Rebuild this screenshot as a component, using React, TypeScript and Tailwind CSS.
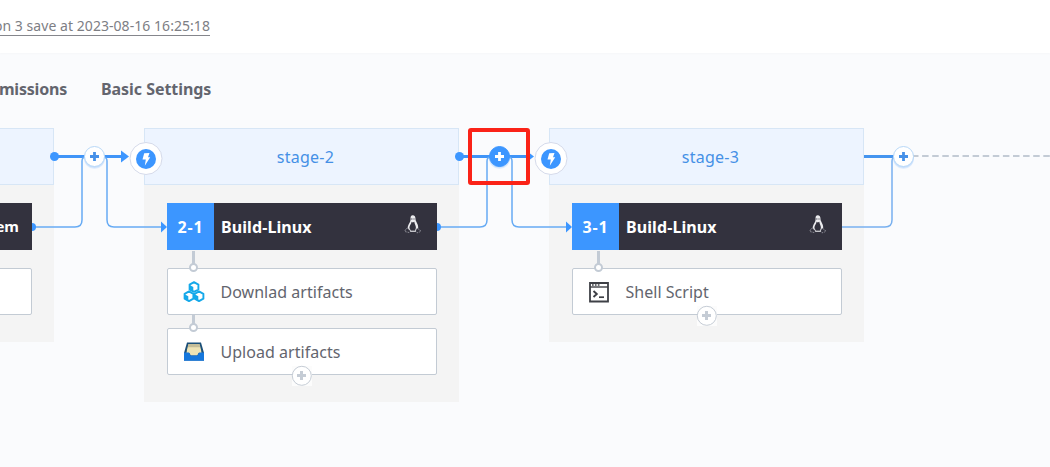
import React from "react";

type Task = { label: string; icon: "cubes" | "tray" | "shell" | "none" };
type Stage = { name: string; jobNo: string; job: string; tasks: Task[] };

const stages: Stage[] = [
  { name: "", jobNo: "", job: "em", tasks: [{ label: "", icon: "none" }] },
  {
    name: "stage-2",
    jobNo: "2-1",
    job: "Build-Linux",
    tasks: [
      { label: "Downlad artifacts", icon: "cubes" },
      { label: "Upload artifacts", icon: "tray" },
    ],
  },
  { name: "stage-3", jobNo: "3-1", job: "Build-Linux", tasks: [{ label: "Shell Script", icon: "shell" }] },
];

function Tux() {
  return (
    <svg width="18" height="20" viewBox="0 0 18 20" className="mr-[15px] -mt-[5px]">
      <path d="M6.600 5C6.300 2.500 7 1.200 8.800 1.200s2.800 1.500 2.700 3.900c0 2.500 2.900 5 2.700 8.600l-1.700 3.300H5.800L3.700 14c0-3.400 3-5.500 2.900-9Z" fill="#ececef" />
      <path d="M7.600 7.800 8.800 8.600l1.500-.9c.3 2.400 1.800 4 1.600 6.300l-1 2.800H6.900L5.400 14c0-2.400 1.900-3.800 2.200-6.200Z" fill="#33323e" />
      <path d="M7.200 4.300h1.200v1.500H7.200zM9.500 4.300h1v1.500h-1z" fill="#6a6973" />
      <path d="m3.600 14.200-2 1-.8 2.300 4.600 1.100 1.200-1.300Zm10.300 0 .5 1.200 2.600 1.500-1.300 1-2.800 1-1.200-1.200.3-2.300Z" fill="#33323e" stroke="#94949d" strokeWidth=".9" strokeDasharray="1.600 .9" />
      <path d="M6.300 17.400h5.500" stroke="#d6d6da" strokeWidth="1" />
    </svg>
  );
}

function Cube({ x, y }: { x: number; y: number }) {
  return (
    <g transform={`translate(${x} ${y})`}>
      <path d="M5.500.9 9.900 3.300v4.900L5.500 10.600 1.100 8.200V3.300Z" fill="#fff" stroke="#15a9ea" strokeWidth="1.900" strokeLinejoin="round" />
      <path d="M1.100 3.800 4.800 5.800v4.800L1.100 8.200Z" fill="#15a9ea" />
    </g>
  );
}

function TaskIcon({ kind }: { kind: Task["icon"] }) {
  if (kind === "cubes")
    return (
      <svg width="22" height="22" viewBox="0 0 22 22">
        <Cube x={5.500} y={0.300} />
        <Cube x={0.500} y={9.500} />
        <Cube x={10.500} y={9.500} />
      </svg>
    );
  if (kind === "tray")
    return (
      <svg width="22" height="22" viewBox="0 0 22 22">
        <path d="M4 1.500h14L21 12v7.500H1V12Z" fill="#1b4f78" />
        <path d="M5.600 3h10.800L18 8.500l.5 3.500h-2.900l-1.400 2.500H7.800L6.400 12H3.500L4 8.500Z" fill="#eee3b4" />
        <path d="M5.600 3h10.800l1 3.300H4.600Z" fill="#c4bd98" />
        <path d="M1 11.500h5l1.500 3h7l1.500-3h5v8.300H1Z" fill="#1677dc" />
      </svg>
    );
  if (kind === "shell")
    return (
      <svg width="22" height="22" viewBox="0 0 22 22" fill="none" stroke="#3e4046">
        <path d="M2 2h18v18.500H2Z" strokeWidth="1.800" />
        <path d="M2 6h18" strokeWidth="1.400" />
        <path d="M4 4h8" strokeWidth="1.300" strokeDasharray="1.700 1.200" />
        <path d="m5.500 10 3.300 3-3.300 3" strokeWidth="1.900" />
        <path d="M11 16.200h5" strokeWidth="1.700" />
      </svg>
    );
  return <span className="w-[22px]" />;
}

function AddDot() {
  return (
    <svg className="absolute -bottom-[12px] left-[123px]" width="21" height="21" viewBox="0 0 21 21">
      <rect x="1" y="1" width="20" height="20" fill="#fcfcfc" />
      <circle cx="10.800" cy="10.800" r="9.500" fill="#fff" stroke="#c5ccd5" />
      <path d="M6 10.500h9M10.500 6v9" stroke="#c5ccd5" strokeWidth="3" />
    </svg>
  );
}

function Trigger() {
  return (
    <svg className="absolute -left-[15px] top-[13px] z-20" width="34" height="34" viewBox="0 0 34 34">
      <circle cx="17" cy="17.500" r="16" fill="#fff" stroke="#d5daea" />
      <circle cx="17" cy="18" r="10" fill="#3c96ff" />
      <path d="m15.200 12.200 5.300-.2-1.500 4.200h2.200l-5.400 8.500 1-6.200h-3.300Z" fill="#fff" />
    </svg>
  );
}

function Plus({ x, solid }: { x: number; solid: boolean }) {
  return (
    <g transform={`translate(${x} 28.500)`}>
      <circle cx="0" cy="2" r="10.500" fill="#3c96ff" opacity=".12" />
      <circle cx="0" cy="1" r="10.500" fill="#3c96ff" opacity=".14" />
      <circle cx="0" cy="0" r="10" fill={solid ? "#3c96ff" : "#fff"} stroke={solid ? "#3c96ff" : "#b8d8f7"} />
      <path d="M-4.500 0h9M0-4.500v9" stroke={solid ? "#fff" : "#4791e8"} strokeWidth="2.800" />
    </g>
  );
}

function Connector({ solid }: { solid: boolean }) {
  return (
    <svg className="absolute left-[293px] top-0 z-10" width="136" height="120" viewBox="0 0 136 120" fill="none">
      <path d="M22 28.500h70" stroke="#3f94f8" strokeWidth="3" />
      <circle cx="22.500" cy="28.500" r="4.500" fill="#3c96ff" />
      <path d="M89 22.500 97 28.500 89 34.500Z" fill="#3c96ff" />
      <path d="M0 99h43q7 0 7-7V33q0-4 4-4M71 29q4 0 4 4v59q0 7 7 7h48" stroke="#67abf4" strokeWidth="1.500" />
      <path d="M0 95a3.500 3.500 0 0 1 0 8Z" fill="#3c96ff" />
      <path d="m129 93.500 6 5.500-6 5.500Z" fill="#3c96ff" />
      <Plus x={62.500} solid={solid} />
    </svg>
  );
}

function EndConnector() {
  return (
    <svg className="absolute left-[293px] top-0 z-10" width="210" height="120" viewBox="0 0 210 120" fill="none">
      <path d="M22 28.500h30" stroke="#4494ef" strokeWidth="3" />
      <path d="M0 99h43q7 0 7-7V33q0-4 4-4" stroke="#78b0ef" strokeWidth="1.500" />
      <path d="M70 28h140" stroke="#c3cbd5" strokeWidth="2" strokeDasharray="6.500 3.600" />
      <Plus x={61.500} solid={false} />
    </svg>
  );
}

function StageColumn({ stage, index }: { stage: Stage; index: number }) {
  return (
    <section className="relative w-[315px] shrink-0">
      <h2 className="flex h-[57px] items-center justify-center border border-[#d7e6f6] bg-[#edf4ff] pl-2 text-[16px] tracking-[0.25px] text-[#4590e6]">
        {stage.name}
      </h2>
      <div className="flex flex-col bg-[#f4f4f4] pb-[27px] pl-[23px] pr-[22px] pt-[18px]">
        <div className="flex h-[47px] items-center bg-[#33323e] text-[16px] font-bold text-white">
          <span className="flex h-full w-[47px] items-center justify-center bg-[#3c96ff] tracking-[0.9px]">
            {stage.jobNo}
          </span>
          {index === 0 ? (
            <span className="ml-auto pr-[13px] text-[15px]">{stage.job}</span>
          ) : (
            <>
              <span className="ml-[7px] flex-1 tracking-[0.1px]">{stage.job}</span>
              <Tux />
            </>
          )}
        </div>
        <div className="mt-[18px] flex flex-col gap-[13px]">
          {stage.tasks.map((task, i) => (
            <div
              key={i}
              className="relative flex h-[47px] items-center rounded-[2px] border border-[#c3cbd4] bg-white pl-[15px] text-[16px] text-[#63656e]"
            >
              <svg className="absolute -top-[18px] left-[20px]" width="12" height="23" viewBox="0 0 12 23">
                <path d={i === 0 ? "M5.500 0v15" : "M5.500 4v12"} stroke="#c3cbd5" strokeWidth="3" />
                <circle cx="5.500" cy="16.500" r="3.500" fill="#fff" stroke="#c3cbd5" strokeWidth="2" />
              </svg>
              <TaskIcon kind={task.icon} />
              <span className="ml-[15.5px] tracking-[0.03px]">{task.label}</span>
              {index > 0 && i === stage.tasks.length - 1 && <AddDot />}
            </div>
          ))}
        </div>
      </div>
      {index > 0 && <Trigger />}
      {index === 2 ? <EndConnector /> : <Connector solid={index === 1} />}
      {index === 1 && (
        <div className="absolute left-[324px] top-0 z-30 h-[57px] w-[62px] rounded-[3px] border-4 border-[#fa2318]" />
      )}
    </section>
  );
}

export default function App() {
  return (
    <div className="flex h-[467px] w-[1050px] flex-col overflow-hidden bg-[#fafbfd] font-['Noto_Sans',sans-serif]">
      <header className="flex h-[53px] shrink-0 justify-start bg-white pt-[15px] shadow-[0_1px_2px_rgba(0,0,0,0.02)]">
        <div className="flex h-[21px] w-[210px] justify-end whitespace-nowrap border-b border-[#85868c] text-[14px] leading-[21px] tracking-[0.05px] text-[#7d7e84]">
          on 3 save at 2023-08-16 16:25:18
        </div>
      </header>
      <nav className="flex h-[75px] shrink-0 pt-[24px] text-[16px] font-bold leading-[24px] text-[#63656e]">
        <span className="flex w-[67px] shrink-0 justify-end whitespace-nowrap tracking-[-0.2px]">missions</span>
        <span className="ml-[34px] tracking-[-0.05px]">Basic Settings</span>
      </nav>
      <main className="-ml-[261px] flex items-start gap-[90px]">
        {stages.map((stage, i) => (
          <StageColumn key={i} stage={stage} index={i} />
        ))}
      </main>
    </div>
  );
}
